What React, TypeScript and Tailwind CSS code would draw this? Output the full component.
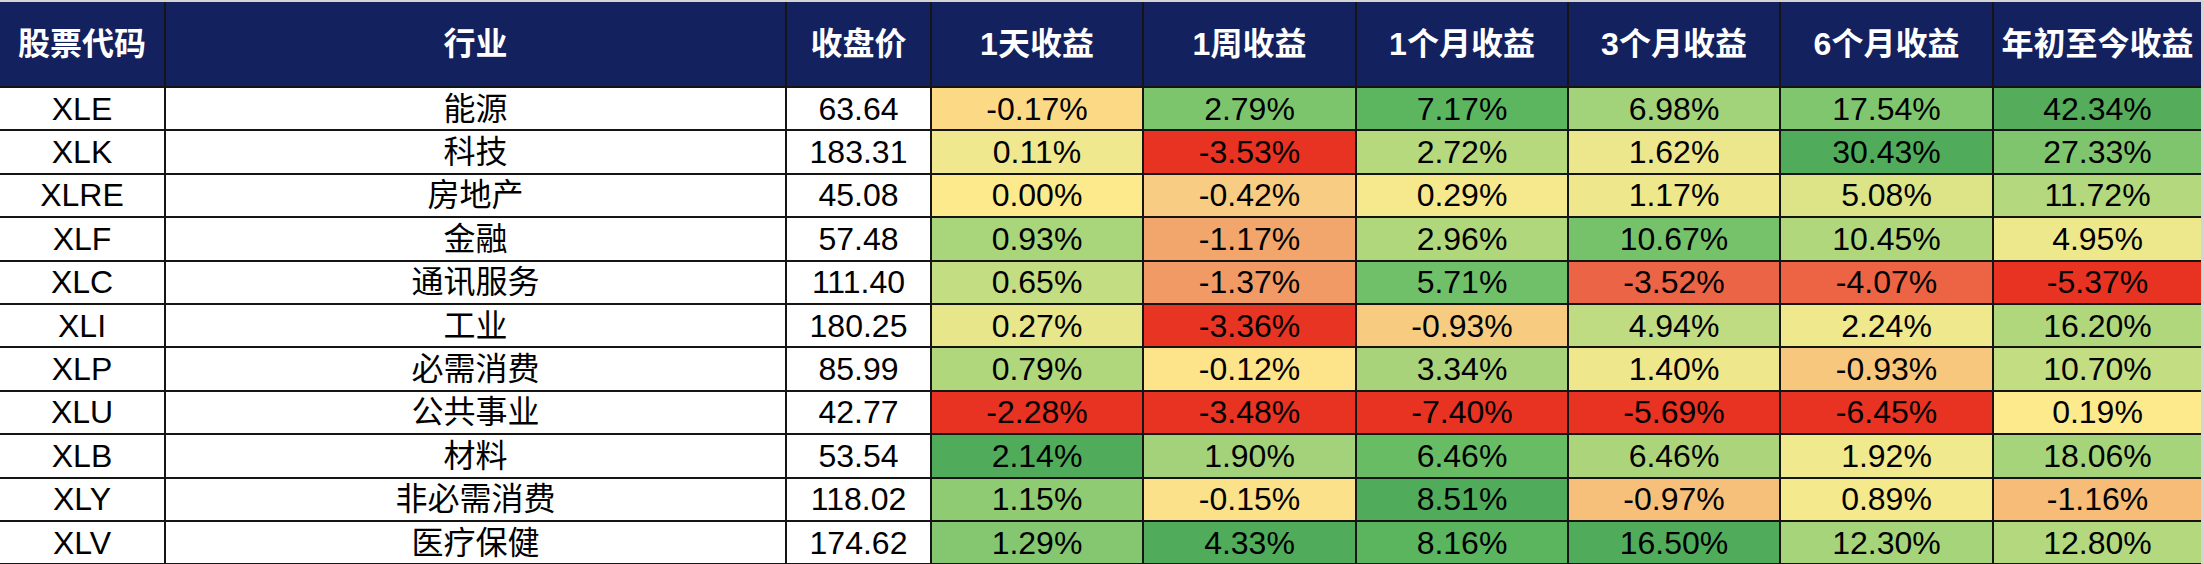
import React from "react";

type Cell = [string, string];
type Row = { code: string; name: string; price: string; cells: Cell[] };

const rows: Row[] = [
  { code: "XLE", name: "能源", price: "63.64", cells: [["-0.17%", "bg-[#fbd985]"], ["2.79%", "bg-[#7dc56d]"], ["7.17%", "bg-[#5bb65f]"], ["6.98%", "bg-[#a2d27a]"], ["17.54%", "bg-[#80c66e]"], ["42.34%", "bg-[#55ad5c]"]] },
  { code: "XLK", name: "科技", price: "183.31", cells: [["0.11%", "bg-[#efe88e]"], ["-3.53%", "bg-[#e83222]"], ["2.72%", "bg-[#b6d97e]"], ["1.62%", "bg-[#ece78c]"], ["30.43%", "bg-[#50ab5a]"], ["27.33%", "bg-[#7ec56d]"]] },
  { code: "XLRE", name: "房地产", price: "45.08", cells: [["0.00%", "bg-[#fdea8c]"], ["-0.42%", "bg-[#f8cc82]"], ["0.29%", "bg-[#f6e88c]"], ["1.17%", "bg-[#eee78c]"], ["5.08%", "bg-[#dce487]"], ["11.72%", "bg-[#b3d87d]"]] },
  { code: "XLF", name: "金融", price: "57.48", cells: [["0.93%", "bg-[#a9d57b]"], ["-1.17%", "bg-[#f2a66c]"], ["2.96%", "bg-[#b0d77c]"], ["10.67%", "bg-[#76c26b]"], ["10.45%", "bg-[#b0d77c]"], ["4.95%", "bg-[#eee88c]"]] },
  { code: "XLC", name: "通讯服务", price: "111.40", cells: [["0.65%", "bg-[#c2dd82]"], ["-1.37%", "bg-[#f29a66]"], ["5.71%", "bg-[#70c06a]"], ["-3.52%", "bg-[#ec6446]"], ["-4.07%", "bg-[#ec6444]"], ["-5.37%", "bg-[#e83222]"]] },
  { code: "XLI", name: "工业", price: "180.25", cells: [["0.27%", "bg-[#e7e68b]"], ["-3.36%", "bg-[#e83422]"], ["-0.93%", "bg-[#f7cc80]"], ["4.94%", "bg-[#c0dc82]"], ["2.24%", "bg-[#efe88d]"], ["16.20%", "bg-[#b0d77c]"]] },
  { code: "XLP", name: "必需消费", price: "85.99", cells: [["0.79%", "bg-[#b1d77c]"], ["-0.12%", "bg-[#fde48a]"], ["3.34%", "bg-[#a8d37a]"], ["1.40%", "bg-[#eee78c]"], ["-0.93%", "bg-[#f6c77d]"], ["10.70%", "bg-[#c3dd82]"]] },
  { code: "XLU", name: "公共事业", price: "42.77", cells: [["-2.28%", "bg-[#e83222]"], ["-3.48%", "bg-[#e83222]"], ["-7.40%", "bg-[#e83222]"], ["-5.69%", "bg-[#e83222]"], ["-6.45%", "bg-[#e83222]"], ["0.19%", "bg-[#fdea8c]"]] },
  { code: "XLB", name: "材料", price: "53.54", cells: [["2.14%", "bg-[#50ab5a]"], ["1.90%", "bg-[#a4d27a]"], ["6.46%", "bg-[#68bc64]"], ["6.46%", "bg-[#acd57b]"], ["1.92%", "bg-[#f0e98d]"], ["18.06%", "bg-[#a6d47a]"]] },
  { code: "XLY", name: "非必需消费", price: "118.02", cells: [["1.15%", "bg-[#8fcb72]"], ["-0.15%", "bg-[#fbe28a]"], ["8.51%", "bg-[#50ab5a]"], ["-0.97%", "bg-[#f6c07b]"], ["0.89%", "bg-[#f4e98d]"], ["-1.16%", "bg-[#f6bc78]"]] },
  { code: "XLV", name: "医疗保健", price: "174.62", cells: [["1.29%", "bg-[#84c770]"], ["4.33%", "bg-[#50ab5a]"], ["8.16%", "bg-[#5ab55e]"], ["16.50%", "bg-[#50ab5a]"], ["12.30%", "bg-[#a6d47a]"], ["12.80%", "bg-[#b3d87d]"]] },
];

const headers = ["股票代码", "行业", "收盘价", "1天收益", "1周收益", "1个月收益", "3个月收益", "6个月收益", "年初至今收益"];

const cellBase = "flex items-center justify-center text-[32px] leading-none text-black";

export default function App() {
  return (
    <div className="w-[2204px] h-[564px] overflow-hidden bg-[#d4d4d4] pt-[2px] font-['Liberation_Sans','Noto_Sans_CJK_SC',sans-serif]">
      <div className="w-[2201px] grid grid-cols-[164px_619px_143px_210px_211px_210px_210px_211px_207px] grid-rows-[84px_repeat(11,41.4px)] gap-[2px] bg-[#151515] pb-[2px]">
        {headers.map((h) => (
          <div
            key={h}
            className="flex items-center justify-center bg-[#13215f] text-white font-bold text-[32px] leading-none whitespace-nowrap"
          >
            {h}
          </div>
        ))}
        {rows.map((r) => (
          <React.Fragment key={r.code}>
            <div className={`${cellBase} bg-white`}>{r.code}</div>
            <div className={`${cellBase} bg-white`}>{r.name}</div>
            <div className={`${cellBase} bg-white`}>{r.price}</div>
            {r.cells.map(([v, c], i) => (
              <div key={i} className={`${cellBase} ${c}`}>
                {v}
              </div>
            ))}
          </React.Fragment>
        ))}
      </div>
    </div>
  );
}
